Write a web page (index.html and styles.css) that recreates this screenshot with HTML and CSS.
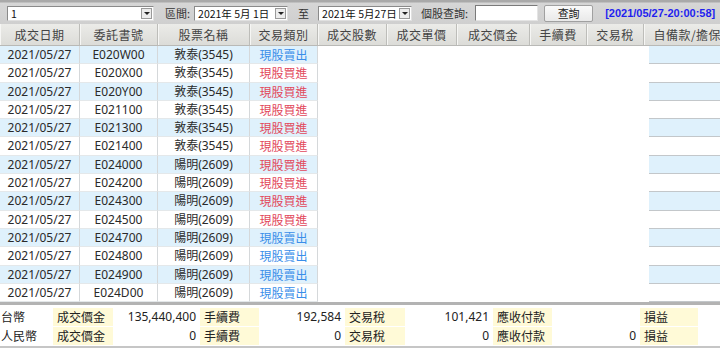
FILE: index.html
```html
<!DOCTYPE html>
<html lang="zh-Hant">
<head>
    <meta charset="UTF-8">
    <meta name="viewport" content="width=device-width, initial-scale=1.0">
    <title>成交回報查詢</title>
    <link rel="stylesheet" href="styles.css">
</head>
<body>
    <div class="toolbar">
        <div class="combo account">
            <span class="combo-text">1</span>
            <span class="combo-btn"></span>
        </div>
        <span class="tb-label range-label">區間:</span>
        <div class="combo date">
            <span class="combo-text">2021年 5月 1日</span>
            <span class="combo-btn"></span>
        </div>
        <span class="tb-label to-label">至</span>
        <div class="combo date">
            <span class="combo-text">2021年 5月27日</span>
            <span class="combo-btn"></span>
        </div>
        <span class="tb-label stock-label">個股查詢:</span>
        <div class="search-box"></div>
        <button class="query-btn">查詢</button>
        <span class="timestamp">[2021/05/27-20:00:58]</span>
    </div>

    <div class="grid-head">
        <div class="hcell">成交日期</div>
        <div class="hcell">委託書號</div>
        <div class="hcell">股票名稱</div>
        <div class="hcell">交易類別</div>
        <div class="hcell">成交股數</div>
        <div class="hcell">成交單價</div>
        <div class="hcell">成交價金</div>
        <div class="hcell">手續費</div>
        <div class="hcell">交易稅</div>
        <div class="hcell last">自備款/擔保品</div>
    </div>

    <div class="grid-body">
        <div class="row alt"><div class="cell">2021/05/27</div><div class="cell">E020W00</div><div class="cell">敦泰(3545)</div><div class="cell sell">現股賣出</div><div class="blank"></div><div class="extra"></div></div>
        <div class="row"><div class="cell">2021/05/27</div><div class="cell">E020X00</div><div class="cell">敦泰(3545)</div><div class="cell buy">現股買進</div><div class="blank"></div><div class="extra"></div></div>
        <div class="row alt"><div class="cell">2021/05/27</div><div class="cell">E020Y00</div><div class="cell">敦泰(3545)</div><div class="cell buy">現股買進</div><div class="blank"></div><div class="extra"></div></div>
        <div class="row"><div class="cell">2021/05/27</div><div class="cell">E021100</div><div class="cell">敦泰(3545)</div><div class="cell buy">現股買進</div><div class="blank"></div><div class="extra"></div></div>
        <div class="row alt"><div class="cell">2021/05/27</div><div class="cell">E021300</div><div class="cell">敦泰(3545)</div><div class="cell buy">現股買進</div><div class="blank"></div><div class="extra"></div></div>
        <div class="row"><div class="cell">2021/05/27</div><div class="cell">E021400</div><div class="cell">敦泰(3545)</div><div class="cell buy">現股買進</div><div class="blank"></div><div class="extra"></div></div>
        <div class="row alt"><div class="cell">2021/05/27</div><div class="cell">E024000</div><div class="cell">陽明(2609)</div><div class="cell buy">現股買進</div><div class="blank"></div><div class="extra"></div></div>
        <div class="row"><div class="cell">2021/05/27</div><div class="cell">E024200</div><div class="cell">陽明(2609)</div><div class="cell buy">現股買進</div><div class="blank"></div><div class="extra"></div></div>
        <div class="row alt"><div class="cell">2021/05/27</div><div class="cell">E024300</div><div class="cell">陽明(2609)</div><div class="cell buy">現股買進</div><div class="blank"></div><div class="extra"></div></div>
        <div class="row"><div class="cell">2021/05/27</div><div class="cell">E024500</div><div class="cell">陽明(2609)</div><div class="cell buy">現股買進</div><div class="blank"></div><div class="extra"></div></div>
        <div class="row alt"><div class="cell">2021/05/27</div><div class="cell">E024700</div><div class="cell">陽明(2609)</div><div class="cell sell">現股賣出</div><div class="blank"></div><div class="extra"></div></div>
        <div class="row"><div class="cell">2021/05/27</div><div class="cell">E024800</div><div class="cell">陽明(2609)</div><div class="cell sell">現股賣出</div><div class="blank"></div><div class="extra"></div></div>
        <div class="row alt"><div class="cell">2021/05/27</div><div class="cell">E024900</div><div class="cell">陽明(2609)</div><div class="cell sell">現股賣出</div><div class="blank"></div><div class="extra"></div></div>
        <div class="row"><div class="cell">2021/05/27</div><div class="cell">E024D00</div><div class="cell">陽明(2609)</div><div class="cell sell">現股賣出</div><div class="blank"></div><div class="extra"></div></div>
    </div>

    <div class="summary">
        <div class="sum-row">
            <div class="currency">台幣</div>
            <div class="label">成交價金</div><div class="value">135,440,400</div>
            <div class="label">手續費</div><div class="value">192,584</div>
            <div class="label">交易稅</div><div class="value">101,421</div>
            <div class="label">應收付款</div><div class="value"></div>
            <div class="label">損益</div><div class="value"></div>
        </div>
        <div class="sum-row">
            <div class="currency">人民幣</div>
            <div class="label">成交價金</div><div class="value">0</div>
            <div class="label">手續費</div><div class="value">0</div>
            <div class="label">交易稅</div><div class="value">0</div>
            <div class="label">應收付款</div><div class="value">0</div>
            <div class="label">損益</div><div class="value"></div>
        </div>
    </div>
</body>
</html>
```

FILE: styles.css
```css
* {
    box-sizing: border-box;
}

body {
    margin: 0;
    width: 720px;
    height: 348px;
    overflow: hidden;
    background: white;
    font-family: "Noto Sans", "Noto Sans CJK TC", sans-serif;
    color: #2a2a2a;
}

/* top query bar */
.toolbar {
    height: 24px;
    display: flex;
    align-items: center;
    padding: 2px 0 0 7px;
    background: linear-gradient(to bottom, #a9a9a9 0, #a9a9a9 2px, #d6d6d6 3px, #cfcfcf 100%);
    font-family: "Noto Sans CJK TC", sans-serif;
    font-size: 11px;
    color: #333;
    white-space: nowrap;
}

.combo {
    height: 15px;
    display: flex;
    align-items: center;
    background: white;
    border: 1px solid #8a8a8a;
    border-right-color: #e0e0e0;
    border-bottom-color: #e0e0e0;
    padding-left: 3px;
}

.combo.account {
    width: 147px;
}

.combo.date {
    width: 94px;
}

.combo-text {
    flex: 1;
    line-height: 13px;
    font-size: 10.5px;
    color: #111;
    white-space: pre;
    overflow: hidden;
}

.combo-btn {
    width: 11px;
    height: 11px;
    margin-right: 1px;
    background: #ececec;
    border: 1px solid #9a9a9a;
    display: flex;
    align-items: center;
    justify-content: center;
}

.combo-btn::after {
    content: "";
    border-left: 3px solid transparent;
    border-right: 3px solid transparent;
    border-top: 3px solid #222;
}

.tb-label {
    line-height: 14px;
}

.range-label {
    margin: 0 4px 0 11px;
}

.to-label {
    margin: 0 9px 0 10px;
}

.stock-label {
    margin: 0 7px 0 9px;
}

.search-box {
    width: 63px;
    height: 16px;
    background: white;
    border: 1px solid #7a7a7a;
    border-right-color: #e4e4e4;
    border-bottom-color: #e4e4e4;
}

.query-btn {
    width: 49px;
    height: 17px;
    margin-left: 6px;
    padding: 0;
    border: 1px solid #a0a0a0;
    border-radius: 2px;
    background: linear-gradient(to bottom, #fafafa, #e9e9e9);
    font-family: "Noto Sans CJK TC", sans-serif;
    font-size: 11px;
    line-height: 14px;
    color: #222;
}

.timestamp {
    margin-left: 12px;
    font-family: "Liberation Sans", sans-serif;
    font-weight: bold;
    font-size: 11px;
    color: #1f1fef;
}

/* column header */
.grid-head {
    height: 22px;
    display: grid;
    grid-template-columns: 80px 78px 92px 68px 69px 70px 73px 57px 57px 99px;
    background: linear-gradient(to bottom, #ebebe8, #dcdcd8);
    border-bottom: 1px solid #b9b9b6;
    font-size: 12px;
    color: #444;
}

.hcell {
    line-height: 21px;
    text-align: center;
    border-right: 1px solid #bdbdb9;
    box-shadow: inset 1px 0 0 #f6f6f4;
    white-space: nowrap;
    overflow: hidden;
    font-family: "Noto Sans CJK TC", sans-serif;
    letter-spacing: 0.5px;
}

.hcell.last {
    border-right: none;
}

/* rows */
.grid-body {
    display: grid;
    grid-auto-rows: 18.3px;
}

.row {
    display: grid;
    grid-template-columns: 80px 78px 92px 68px 331px 1fr;
    font-size: 12px;
}

.cell {
    text-align: center;
    line-height: 17px;
    border-right: 1px solid #d5d8da;
    border-bottom: 1px solid #e4e8ea;
    white-space: nowrap;
}

.row.alt .cell,
.row.alt .extra {
    background: #dff1fc;
}

.extra {
    border-bottom: 1px solid #c3c7ca;
}

.sell {
    color: #3a8ee9;
    font-family: "Noto Sans CJK TC", sans-serif;
}

.buy {
    color: #e2475b;
    font-family: "Noto Sans CJK TC", sans-serif;
}

/* totals */
.summary {
    border-top: 3px solid #b3b3b3;
    border-bottom: 2px solid #c6c6c6;
    padding: 3px 0 1px;
    display: flex;
    flex-direction: column;
    gap: 1px;
    font-size: 12px;
    color: #222;
}

.sum-row {
    height: 18px;
    display: grid;
    grid-template-columns: 53px 60px 87px 59px 86px 60px 88px 59px 88px 58px 1fr;
    line-height: 18px;
    white-space: nowrap;
}

.currency {
    padding-left: 1px;
    font-family: "Noto Sans CJK TC", sans-serif;
}

.label {
    background: #fffad7;
    padding-left: 4px;
    font-family: "Noto Sans CJK TC", sans-serif;
}

.value {
    text-align: right;
    padding-right: 4px;
}
```
